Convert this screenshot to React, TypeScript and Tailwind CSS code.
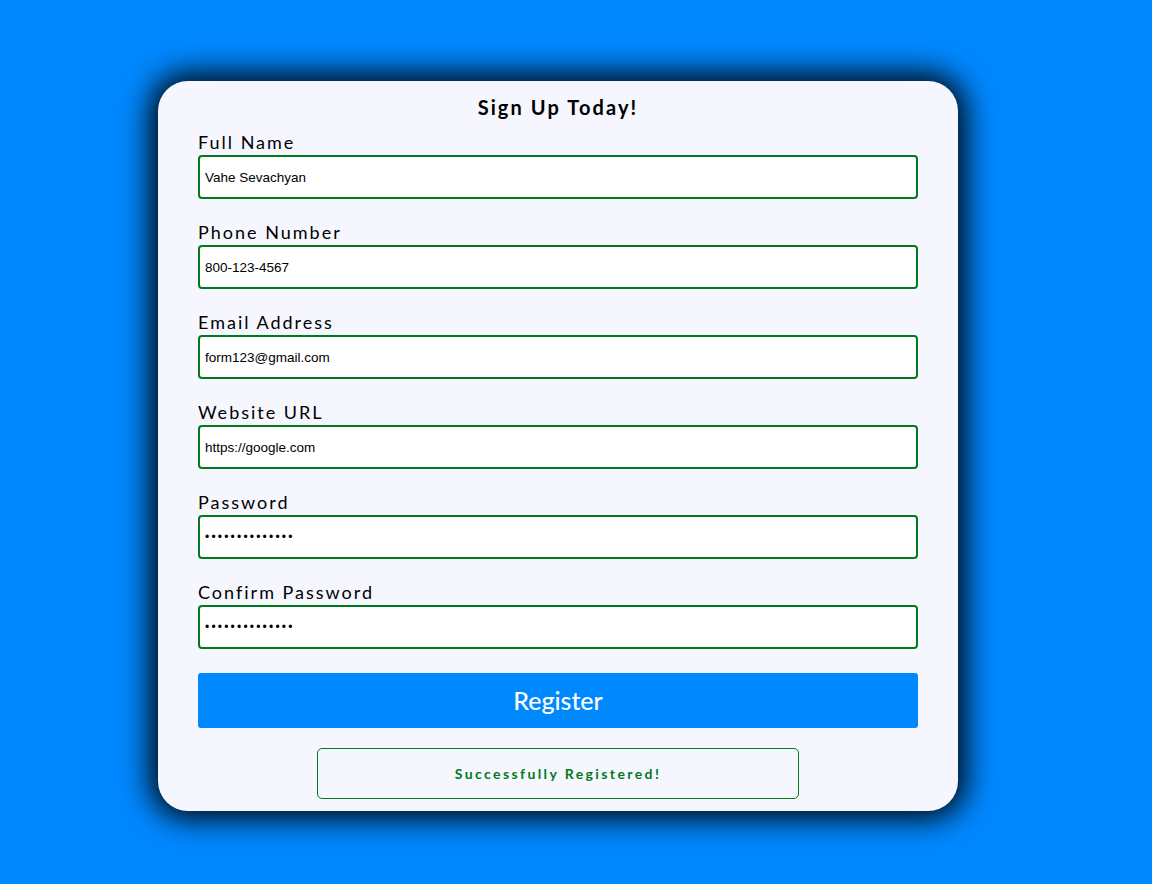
const fields = [
  { label: 'Full Name', type: 'text', value: 'Vahe Sevachyan' },
  { label: 'Phone Number', type: 'text', value: '800-123-4567' },
  { label: 'Email Address', type: 'text', value: 'form123@gmail.com' },
  { label: 'Website URL', type: 'text', value: 'https://google.com' },
  { label: 'Password', type: 'password', value: 'password123456' },
  { label: 'Confirm Password', type: 'password', value: 'password123456' },
];

export default function App() {
  return (
    <div className="min-h-[884px] w-full bg-[#0088ff] pt-[81px] pl-[158px] font-['Lato',sans-serif]">
      <div className="w-[800px] h-[730px] rounded-[30px] bg-[#f6f7fe] px-[40px] pt-[13px] shadow-[0_0_30px_8px_rgba(0,0,0,0.95)]">
        <h1 className="text-center text-[20px] leading-[26px] font-bold tracking-[2.1px] text-black">
          Sign Up Today!
        </h1>
        <div className="mt-[11px] flex flex-col gap-[22px]">
          {fields.map((f) => (
            <div key={f.label} className="flex flex-col gap-[2px]">
              <label className="text-[18px] leading-[22px] tracking-[2px] text-black">
                {f.label}
              </label>
              <input
                type={f.type}
                defaultValue={f.value}
                readOnly
                className={
                  f.type === 'password'
                    ? "h-[44px] w-[720px] rounded-[4px] border-2 border-[#007a1c] bg-white px-[5px] text-[12px] tracking-[2.2px] text-black font-['Liberation_Sans',Arial,sans-serif] outline-none"
                    : "h-[44px] w-[720px] rounded-[4px] border-2 border-[#007a1c] bg-white px-[5px] text-[13.5px] text-black font-['Liberation_Sans',Arial,sans-serif] outline-none"
                }
              />
            </div>
          ))}
        </div>
        <button className="mt-[24px] h-[55px] w-[720px] rounded-[3px] bg-[#0088ff] text-[25px] font-medium text-white">
          Register
        </button>
        <div className="mt-[20px] flex justify-center">
          <div className="flex h-[51px] w-[482px] items-center justify-center rounded-[5px] border border-[#007a1c] text-[14px] font-bold tracking-[2.4px] text-[#007a1c]">
            Successfully Registered!
          </div>
        </div>
      </div>
    </div>
  );
}
